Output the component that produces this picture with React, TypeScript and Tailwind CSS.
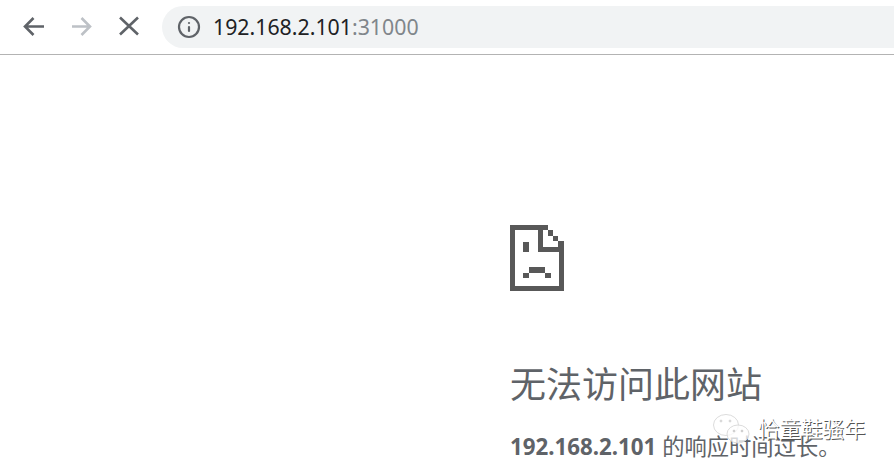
import { Info } from "lucide-react";

function NavIcon({ d, className }: { d: string; className: string }) {
  return (
    <svg width="28" height="28" viewBox="0 0 28 28" fill="none" stroke="currentColor" strokeWidth="2.6" className={className}>
      <path d={d} />
    </svg>
  );
}

function SadFile() {
  return (
    <svg width="54" height="66" viewBox="0 0 54 66" shapeRendering="crispEdges" fill="#585858">
      <path d="M0 0H38V5H43V11H48V16H54V66H0V0ZM5 5V61H49V27H28V5H5ZM33 5V22H48V16H43V11H38V5H33Z" fillRule="evenodd" />
      <rect x="38" y="5" width="5" height="6" />
      <rect x="43" y="11" width="5" height="5" />
      <rect x="13" y="17" width="6" height="10" />
      <rect x="19" y="42" width="16" height="6" />
      <rect x="13" y="48" width="6" height="5" />
      <rect x="35" y="48" width="6" height="5" />
    </svg>
  );
}

export default function App() {
  return (
    <div className="relative h-[471px] w-[894px] overflow-hidden bg-white font-['Noto_Sans','Noto_Sans_CJK_SC',sans-serif]">
      {/* toolbar */}
      <div className="flex h-[55px] items-center border-b border-[#b3b3b3] pl-[19px]">
        <NavIcon d="M25 13.5H6M14.5 5L6 13.5L14.5 22" className="text-[#5f6368]" />
        <NavIcon d="M5 13.5H23M14.5 5L23 13.5L14.5 22" className="ml-5 text-[#bdc1c6]" />
        <NavIcon d="M5 4.5L23 21.5M23 4.5L5 21.5" className="ml-5 text-[#5f6368]" />
        <div className="ml-[19px] flex h-[42px] flex-1 items-center rounded-l-[21px] bg-[#f1f3f4] pl-[15px]">
          <Info className="h-6 w-6 text-[#5f6368]" strokeWidth={2.2} />
          <div className="ml-[12px] text-[21.3px] text-[#202124]">
            192.168.2.101<span className="text-[#80868b]">:31000</span>
          </div>
        </div>
      </div>

      {/* error page */}
      <div className="pl-[510px] pt-[170px]">
        <SadFile />
        <h1 className="mt-[70px] text-[36px] leading-[48px] font-normal text-[#5f6368]">无法访问此网站</h1>
        <p className="mt-[22px] text-[22.3px] leading-[32px] whitespace-nowrap text-[#5f6368]">
          <b className="font-bold">192.168.2.101</b> 的响应时间过长。
        </p>
      </div>

      {/* watermark */}
      <div className="absolute left-[713px] top-[414px] flex items-start">
        <svg width="37" height="30" viewBox="0 0 37 30" fill="none" stroke="#dcdcdc" strokeWidth="1">
          <ellipse cx="13" cy="11" rx="12.5" ry="10.5" fill="#ffffff" fillOpacity="0.75" />
          <ellipse cx="25" cy="20" rx="11" ry="9" fill="#ffffff" fillOpacity="0.75" />
          <circle cx="8" cy="7" r="1" fill="#c8c8c8" />
          <circle cx="17" cy="7" r="1" fill="#c8c8c8" />
          <circle cx="21" cy="17" r="1" fill="#999999" />
          <circle cx="29" cy="17" r="1" fill="#999999" />
        </svg>
        <span className="mt-[4px] ml-[8px] text-[21.5px] leading-none text-white [text-shadow:1px_1px_0_#555]">恰童鞋骚年</span>
      </div>
    </div>
  );
}
